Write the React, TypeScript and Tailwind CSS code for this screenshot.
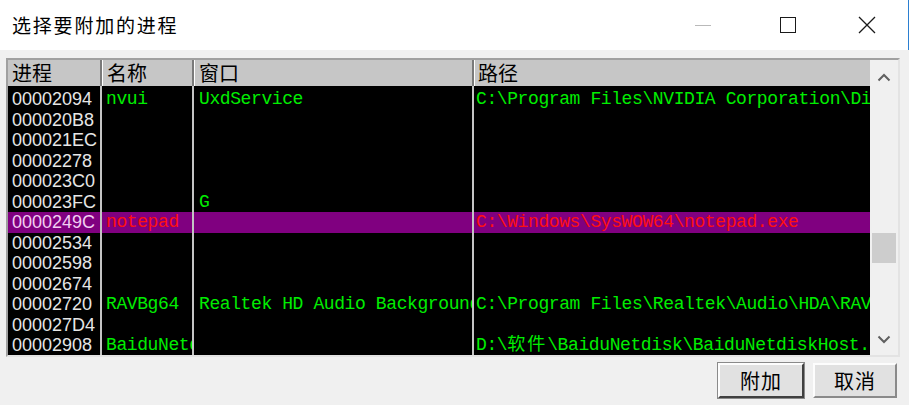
import React from "react";

type Row = {
  id: string;
  name?: string;
  win?: string;
  path?: React.ReactNode;
  sel?: boolean;
};

const rows: Row[] = [
  { id: "00002094", name: "nvui", win: "UxdService", path: "C:\\Program Files\\NVIDIA Corporation\\Display" },
  { id: "000020B8" },
  { id: "000021EC" },
  { id: "00002278" },
  { id: "000023C0" },
  { id: "000023FC", win: "G" },
  { id: "0000249C", name: "notepad", path: "C:\\Windows\\SysWOW64\\notepad.exe", sel: true },
  { id: "00002534" },
  { id: "00002598" },
  { id: "00002674" },
  { id: "00002720", name: "RAVBg64", win: "Realtek HD Audio Background Process", path: "C:\\Program Files\\Realtek\\Audio\\HDA\\RAVBg64.exe" },
  { id: "000027D4" },
  {
    id: "00002908",
    name: "BaiduNetdisk",
    path: (
      <>
        D:\<span className="tracking-[2px]">软件</span>\BaiduNetdisk\BaiduNetdiskHost.exe
      </>
    ),
  },
];

const cjk = { fontFamily: '"Noto Sans CJK SC", "Noto Sans", sans-serif' };
const mono = { fontFamily: '"Liberation Mono", "Noto Sans CJK SC", monospace' };
const sans = { fontFamily: '"Liberation Sans", Arial, sans-serif' };

function Chevron({ up }: { up?: boolean }) {
  return (
    <svg width="14" height="9" viewBox="0 0 14 9">
      <path
        d={up ? "M1.5 7.5 L7 2 L12.5 7.5" : "M1.5 1.5 L7 7 L12.5 1.5"}
        fill="none"
        stroke="#606060"
        strokeWidth="2"
      />
    </svg>
  );
}

export default function App() {
  return (
    <div className="w-[909px] h-[405px] bg-[#f0f0f0] flex flex-col overflow-hidden relative">
      {/* title bar */}
      <div className="h-[50px] bg-white flex items-center shrink-0 border-r border-[#2b7fd1]">
        <div className="pl-[12px] text-[19px] tracking-[1.8px] text-black flex-1" style={cjk}>
          选择要附加的进程
        </div>
        <div className="flex items-center h-full">
          <div className="w-[80px] h-full flex items-center justify-center pr-[10px]">
            <div className="w-[16px] h-px bg-[#b9b9b9]" />
          </div>
          <div className="w-[80px] h-full flex items-center justify-center">
            <div className="w-[16px] h-[16px] border border-[#1a1a1a]" />
          </div>
          <div className="w-[80px] h-full flex items-center justify-center pr-[2px]">
            <svg width="18" height="18" viewBox="0 0 18 18">
              <path d="M1 1 L17 17 M17 1 L1 17" stroke="#1a1a1a" strokeWidth="1.3" />
            </svg>
          </div>
        </div>
      </div>

      {/* body */}
      <div className="flex-1 flex flex-col px-[6px] pt-[8px] pr-[9px]">
        <div className="h-[299px] border-2 border-t-[#a0a0a0] border-l-[#a0a0a0] border-b-[#e3e3e3] border-r-[#e3e3e3] flex bg-black">
          <div className="flex-1 flex flex-col overflow-hidden">
            {/* header */}
            <div className="h-[26px] flex bg-[#c6c6c6] shrink-0 text-black text-[20px] leading-[26px]" style={cjk}>
              <div className="w-[94px] pl-[4px] border-r-2 border-r-[#7a7a7a]">进程</div>
              <div className="w-[92px] pl-[4px] border-r-2 border-r-[#7a7a7a] border-l border-l-white">名称</div>
              <div className="w-[280px] pl-[4px] border-r-2 border-r-[#7a7a7a] border-l border-l-white">窗口</div>
              <div className="flex-1 pl-[3px] border-l border-l-white">路径</div>
            </div>
            {/* rows */}
            <div className="flex-1 overflow-hidden flex flex-col">
              <div className="h-[3px] flex shrink-0">
                <div className="w-[94px] border-r-2 border-r-[#c4c4c4]" />
                <div className="w-[92px] border-r-2 border-r-[#c4c4c4]" />
                <div className="w-[280px] border-r-2 border-r-[#c4c4c4]" />
                <div className="flex-1" />
              </div>
              {rows.map((r) => {
                const c = r.sel ? "text-[#ff1010]" : "text-[#00ee00]";
                return (
                  <div
                    key={r.id}
                    className={`h-[20.5px] shrink-0 flex leading-[20.5px] whitespace-nowrap ${r.sel ? "bg-[#800080]" : ""}`}
                  >
                    <div
                      className={`w-[94px] pl-[4px] border-r-2 border-r-[#c4c4c4] text-[18px] overflow-hidden ${r.sel ? "text-[#f2cdf2]" : "text-[#e6e6e6]"}`}
                      style={sans}
                    >
                      {r.id}
                    </div>
                    <div
                      className={`w-[92px] pl-[4px] border-r-2 border-r-[#c4c4c4] text-[18px] tracking-[-0.4px] overflow-hidden ${c}`}
                      style={mono}
                    >
                      {r.name ?? ""}
                    </div>
                    <div
                      className={`w-[280px] pl-[5px] border-r-2 border-r-[#c4c4c4] text-[18px] tracking-[-0.4px] overflow-hidden ${c}`}
                      style={mono}
                    >
                      {r.win ?? ""}
                    </div>
                    <div
                      className={`flex-1 pl-[2px] text-[18px] tracking-[-0.4px] overflow-hidden ${c}`}
                      style={mono}
                    >
                      {r.path ?? ""}
                    </div>
                  </div>
                );
              })}
            </div>
          </div>
          {/* scrollbar */}
          <div className="w-[28px] bg-[#f0f0f0] flex flex-col shrink-0">
            <div className="h-[32px] flex items-center justify-center pt-[2px]">
              <Chevron up />
            </div>
            <div className="flex-1 flex flex-col px-[2px]">
              <div className="h-[141px]" />
              <div className="h-[30px] bg-[#cdcdcd]" />
            </div>
            <div className="h-[32px] flex items-center justify-center">
              <Chevron />
            </div>
          </div>
        </div>

        {/* buttons */}
        <div className="flex justify-end gap-[9px] mt-[6px] pr-[3px]">
          <button
            className="w-[86px] h-[35px] bg-[#e1e1e1] border-2 border-t-[#fdfdfd] border-l-[#fdfdfd] border-b-[#404040] border-r-[#404040] outline outline-1 outline-[#8a8a8a] text-[20px] text-black leading-none tracking-[1px]"
            style={cjk}
          >
            附加
          </button>
          <button
            className="w-[84px] h-[35px] bg-[#e1e1e1] border-2 border-t-[#fdfdfd] border-l-[#fdfdfd] border-b-[#8a8a8a] border-r-[#8a8a8a] text-[20px] text-black leading-none tracking-[1px]"
            style={cjk}
          >
            取消
          </button>
        </div>
      </div>
    </div>
  );
}
